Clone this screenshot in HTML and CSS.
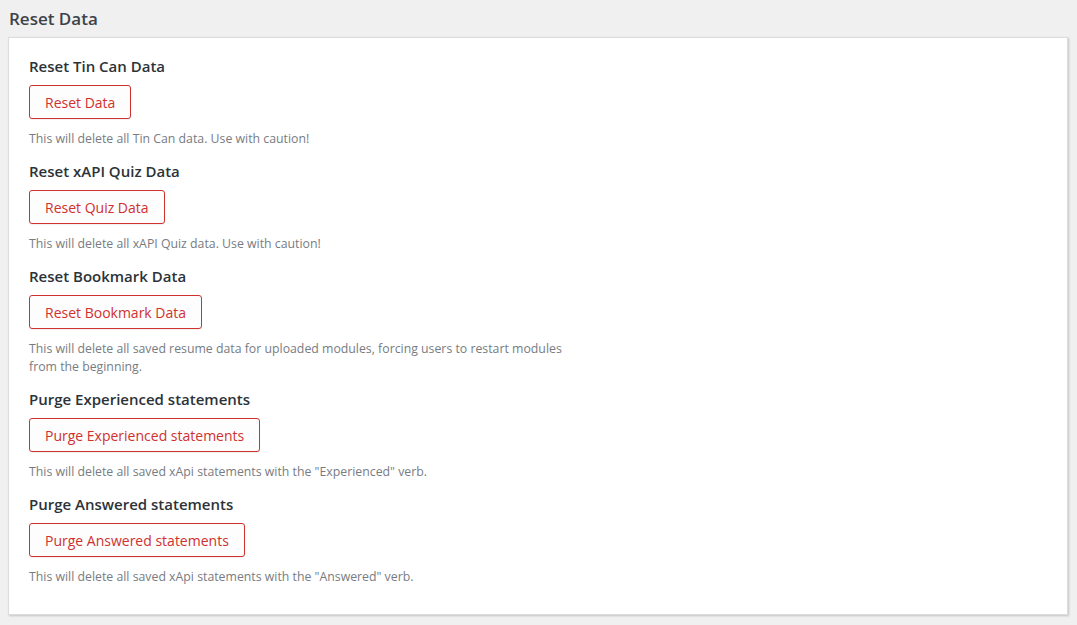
FILE: index.html
```html
<!DOCTYPE html>
<html>
<head>
<meta charset="utf-8">
<link rel="stylesheet" href="styles.css">
</head>
<body>
<h1 class="page-title">Reset Data</h1>
<div class="card">
  <div class="section">
    <h2 class="section-title">Reset Tin Can Data</h2>
    <button class="btn-danger">Reset Data</button>
    <p class="desc">This will delete all Tin Can data. Use with caution!</p>
  </div>
  <div class="section">
    <h2 class="section-title">Reset xAPI Quiz Data</h2>
    <button class="btn-danger">Reset Quiz Data</button>
    <p class="desc">This will delete all xAPI Quiz data. Use with caution!</p>
  </div>
  <div class="section">
    <h2 class="section-title">Reset Bookmark Data</h2>
    <button class="btn-danger">Reset Bookmark Data</button>
    <p class="desc narrow">This will delete all saved resume data for uploaded modules, forcing users to restart modules from the beginning.</p>
  </div>
  <div class="section">
    <h2 class="section-title">Purge Experienced statements</h2>
    <button class="btn-danger">Purge Experienced statements</button>
    <p class="desc">This will delete all saved xApi statements with the "Experienced" verb.</p>
  </div>
  <div class="section">
    <h2 class="section-title">Purge Answered statements</h2>
    <button class="btn-danger">Purge Answered statements</button>
    <p class="desc">This will delete all saved xApi statements with the "Answered" verb.</p>
  </div>
</div>
</body>
</html>
```

FILE: styles.css
```css
html, body {
  margin: 0;
  padding: 0;
  background: #f0f0f0;
  font-family: "Open Sans", "Noto Sans", sans-serif;
  color: #3c434a;
}
.page-title {
  margin: 0;
  padding: 8px 0 0 9px;
  height: 29px;
  font-size: 17px;
  line-height: 22px;
  font-weight: 600;
  color: #3c434a;
}
.card {
  margin: 0 9px 10px 8px;
  background: #fff;
  border: 1px solid #dcdcde;
  box-shadow: 1px 1px 2px rgba(0, 0, 0, 0.18);
  padding: 18px 20px 28px 20px;
  display: flex;
  flex-direction: column;
  gap: 13px;
}
.section {
  display: flex;
  flex-direction: column;
  align-items: flex-start;
}
.section-title {
  margin: 0 0 9px 0;
  font-size: 15px;
  line-height: 20px;
  font-weight: 600;
  color: #2c3338;
}
.btn-danger {
  height: 34px;
  padding: 0 15px;
  font-family: inherit;
  font-size: 14px;
  color: #d0312f;
  background: #fdfdfd;
  border: 1px solid #d0312f;
  border-radius: 3px;
  box-shadow: 0 1px 1px rgba(0, 0, 0, 0.06);
  cursor: pointer;
}
.desc {
  margin: 11px 0 0 0;
  font-size: 12.3px;
  line-height: 18px;
  color: #787c82;
}
.narrow {
  max-width: 545px;
}
```
